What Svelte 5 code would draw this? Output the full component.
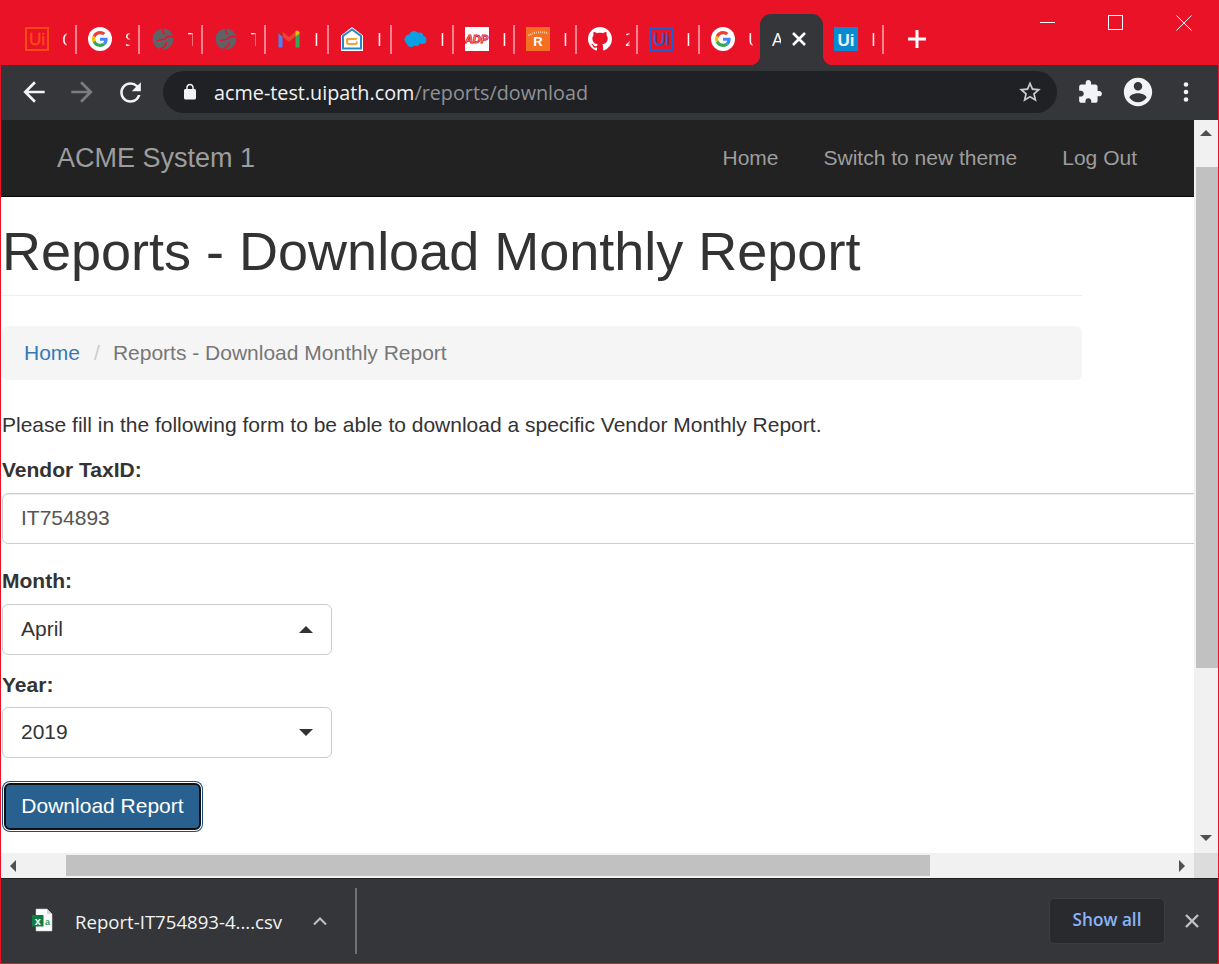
<script>
  const tabs = [
    { w: 63, icon: 'ui-orange', t: 'O', sep: true },
    { w: 63, icon: 'google', t: 'S', sep: true },
    { w: 63, icon: 'globe', t: 'T', sep: true },
    { w: 63, icon: 'globe', t: 'T', sep: true },
    { w: 63, icon: 'gmail', t: 'I', sep: true },
    { w: 63, icon: 'mail', t: 'I', sep: true },
    { w: 62, icon: 'cloud', t: 'I', sep: true },
    { w: 61, icon: 'adp', t: 'I', sep: true },
    { w: 62, icon: 'r', t: 'I', sep: true },
    { w: 61, icon: 'github', t: '2', sep: true },
    { w: 62, icon: 'ui-blue', t: 'I', sep: true },
    { w: 60, icon: 'google', t: 'U', sep: false },
    { w: 63, icon: 'active', t: 'A', sep: false },
    { w: 61, icon: 'ui-fill', t: 'I', sep: true }
  ];
</script>

<div class="window">
  <header class="strip">
    <div class="tabs">
      {#each tabs as tab}
        <div class="tab" class:active={tab.icon === 'active'} class:sep={tab.sep} style="width:{tab.w}px">
          {#if tab.icon === 'active'}
            <span class="active-title">A</span>
            <svg class="tab-close" width="16" height="16" viewBox="0 0 16 16"><path d="M2 2l12 12M14 2L2 14" stroke="#fff" stroke-width="2.6" fill="none"/></svg>
          {:else}
            <svg class="fav" width="24" height="24" viewBox="0 0 24 24">
              {#if tab.icon === 'ui-orange'}
                <rect x="1" y="1" width="22" height="22" fill="none" stroke="#fa4a14" stroke-width="2"/>
                <text x="12" y="18" class="ui" fill="#fa4a14" stroke="#fa4a14">Ui</text>
              {:else if tab.icon === 'ui-blue'}
                <rect x="1" y="1" width="22" height="22" fill="none" stroke="#1a5fd8" stroke-width="2"/>
                <text x="12" y="18" class="ui" fill="#1a5fd8" stroke="#1a5fd8">Ui</text>
              {:else if tab.icon === 'ui-fill'}
                <rect width="24" height="24" fill="#0a8ad0"/>
                <text x="12" y="18.500" class="ui strong" fill="#eaf7ff">Ui</text>
              {:else if tab.icon === 'google'}
                <circle cx="12" cy="12" r="12" fill="#fff"/>
                <g transform="translate(4 4) scale(.3333)">
                  <path fill="#EA4335" d="M24 9.5c3.54 0 6.71 1.22 9.21 3.6l6.85-6.85C35.9 2.38 30.47 0 24 0 14.62 0 6.51 5.38 2.56 13.22l7.98 6.19C12.43 13.72 17.74 9.5 24 9.5z"/>
                  <path fill="#4285F4" d="M46.98 24.55c0-1.57-.15-3.09-.38-4.55H24v9.02h12.94c-.58 2.96-2.26 5.48-4.78 7.18l7.73 6c4.51-4.18 7.09-10.36 7.09-17.65z"/>
                  <path fill="#FBBC05" d="M10.53 28.59c-.48-1.45-.76-2.99-.76-4.59s.27-3.14.76-4.59l-7.98-6.19C.92 16.46 0 20.12 0 24c0 3.88.92 7.54 2.56 10.78l7.97-6.19z"/>
                  <path fill="#34A853" d="M24 48c6.48 0 11.93-2.13 15.89-5.81l-7.73-6c-2.15 1.45-4.92 2.3-8.16 2.3-6.26 0-11.57-4.22-13.47-9.91l-7.98 6.19C6.51 42.62 14.62 48 24 48z"/>
                </g>
              {:else if tab.icon === 'globe'}
                <circle cx="12" cy="12" r="10.500" fill="#5f6368"/>
                <g fill="none" stroke="#ea1227" stroke-width="1.700">
                  <path d="M22 10c-4-1.500-6-.5-8 1.500s-5 .5-8 2.500"/>
                  <path d="M12.500 1.500c-2 3-.5 5 1.500 5.500"/>
                  <path d="M9 22c3-1 6-3 6.500-7"/>
                </g>
              {:else if tab.icon === 'gmail'}
                <path d="M1.500 5.500v15h4v-11z" fill="#4285f4"/>
                <path d="M18.500 9.500v11h4v-15z" fill="#34a853"/>
                <path d="M5.500 4.500L12 10l6.500-5.500v5L12 15 5.500 9.500z" fill="#ea4335"/>
                <path d="M1.500 5.500a2.500 2.500 0 0 1 4-1.500v5.500l-4-3z" fill="#c5221f"/>
                <path d="M18.500 4a2.500 2.500 0 0 1 4 1.500v1l-4 3z" fill="#fbbc04"/>
              {:else if tab.icon === 'mail'}
                <path d="M12 0L1 8.500V24h22V8.500z" fill="#fff"/>
                <path d="M12 2.500L3 9v12.500h18V9z" fill="none" stroke="#2a86c4" stroke-width="2"/>
                <path d="M7 11h11l-2 2H9.500c-1 0-1.500.5-1.500 1.500S8.500 16 9.500 16H16v-2l2 1c0 2-1 3-2.500 3h-7C7 18 6 17 6 15c0-2 0-3 1-4z" fill="#f2a33a"/>
              {:else if tab.icon === 'cloud'}
                <g fill="#0b9fe3">
                  <circle cx="6.500" cy="12.500" r="5"/>
                  <circle cx="11" cy="8.500" r="4.500"/>
                  <circle cx="16.500" cy="9.500" r="4"/>
                  <circle cx="19.500" cy="13" r="4"/>
                  <circle cx="13" cy="15" r="4"/>
                  <circle cx="8" cy="16" r="4"/>
                </g>
              {:else if tab.icon === 'adp'}
                <rect width="24" height="24" fill="#fff"/>
                <text x="11.500" y="16" class="adp">ADP</text>
              {:else if tab.icon === 'r'}
                <rect width="24" height="24" fill="#f37022"/>
                <path d="M2.500 8.500Q12 3 22 6.500" fill="none" stroke="#f9c9a5" stroke-width="2" stroke-dasharray="1 1"/>
                <text x="12" y="18.500" class="rr">R</text>
              {:else if tab.icon === 'github'}
                <g transform="scale(1.500)"><path fill="#fff" d="M8 0C3.580 0 0 3.580 0 8c0 3.540 2.290 6.530 5.470 7.590.4.07.55-.17.55-.38 0-.19-.01-.82-.01-1.490-2.010.37-2.530-.49-2.690-.94-.09-.23-.48-.94-.82-1.130-.28-.15-.68-.52-.01-.53.63-.01 1.080.58 1.230.82.72 1.210 1.870.87 2.330.66.07-.52.28-.87.51-1.070-1.780-.2-3.640-.89-3.640-3.950 0-.87.31-1.590.82-2.150-.08-.2-.36-1.020.08-2.120 0 0 .67-.21 2.200.82.64-.18 1.320-.27 2-.27.68 0 1.360.09 2 .27 1.530-1.040 2.200-.82 2.200-.82.44 1.100.16 1.920.08 2.120.51.56.82 1.270.82 2.150 0 3.070-1.870 3.750-3.650 3.950.29.25.54.73.54 1.480 0 1.070-.01 1.930-.01 2.200 0 .21.15.46.55.38A8.013 8.013 0 0016 8c0-4.420-3.580-8-8-8z"/></g>
              {/if}
            </svg>
            <span class="sliver">{tab.t}</span>
          {/if}
        </div>
      {/each}
    </div>
    <svg class="plus" width="20" height="20" viewBox="0 0 20 20"><path d="M10 1v18M1 10h18" stroke="#fff" stroke-width="3" fill="none"/></svg>
    <div class="controls">
      <div class="ctl"><svg width="16" height="16" viewBox="0 0 16 16"><path d="M0 7.500h15" stroke="#fff" fill="none"/></svg></div>
      <div class="ctl mid"><svg width="16" height="16" viewBox="0 0 16 16"><rect x=".5" y=".5" width="14" height="14" stroke="#fff" fill="none"/></svg></div>
      <div class="ctl"><svg width="16" height="16" viewBox="0 0 16 16"><path d="M.5.5l15 15M15.500.5l-15 15" stroke="#fff" fill="none"/></svg></div>
    </div>
  </header>

  <div class="toolbar">
    <div class="tb-btn"><svg width="32" height="32" viewBox="0 0 24 24"><path fill="#f1f3f4" d="M20 11H7.830l5.590-5.590L12 4l-8 8 8 8 1.410-1.410L7.830 13H20v-2z"/></svg></div>
    <div class="tb-btn"><svg width="32" height="32" viewBox="0 0 24 24"><path fill="#7c7d80" d="M4 11h12.170l-5.590-5.590L12 4l8 8-8 8-1.410-1.410L16.170 13H4v-2z"/></svg></div>
    <div class="tb-btn"><svg width="31" height="31" viewBox="0 0 24 24"><path fill="#f1f3f4" d="M17.650 6.350A7.958 7.958 0 0 0 12 4c-4.420 0-7.990 3.580-7.990 8s3.570 8 7.990 8c3.730 0 6.840-2.550 7.730-6h-2.080A5.990 5.990 0 0 1 12 18c-3.310 0-6-2.690-6-6s2.690-6 6-6c1.660 0 3.140.69 4.220 1.780L13 11h7V4l-2.350 2.350z"/></svg></div>
    <div class="omni">
      <svg class="lock" width="18" height="18" viewBox="0 0 24 24"><path fill="#f1f3f4" d="M18 8h-1V6c0-2.760-2.240-5-5-5S7 3.240 7 6v2H6c-1.100 0-2 .9-2 2v10c0 1.100.9 2 2 2h12c1.100 0 2-.9 2-2V10c0-1.100-.9-2-2-2zM9 6c0-1.660 1.340-3 3-3s3 1.340 3 3v2H9V6z"/></svg>
      <span class="url"><span class="host">acme-test.uipath.com</span><span class="path">/reports/download</span></span>
      <svg class="star" width="26" height="26" viewBox="0 0 24 24"><path fill="#c9cacb" d="M22 9.240l-7.190-.62L12 2 9.190 8.630 2 9.240l5.460 4.730L5.820 21 12 17.270 18.180 21l-1.630-7.030L22 9.240zM12 15.400l-3.760 2.270 1-4.280-3.320-2.880 4.380-.38L12 6.100l1.710 4.040 4.380.38-3.320 2.880 1 4.280L12 15.400z"/></svg>
    </div>
    <div class="tb-btn first-r"><svg width="26" height="26" viewBox="0 0 24 24"><path fill="#f1f3f4" d="M20.500 11H19V7c0-1.100-.9-2-2-2h-4V3.500C13 2.120 11.880 1 10.500 1S8 2.120 8 3.500V5H4c-1.100 0-1.990.9-1.990 2v3.800H3.500c1.490 0 2.700 1.210 2.700 2.700s-1.210 2.700-2.700 2.700H2V20c0 1.100.9 2 2 2h3.800v-1.500c0-1.490 1.210-2.700 2.700-2.700 1.490 0 2.700 1.210 2.700 2.700V22H17c1.100 0 2-.9 2-2v-4h1.500c1.380 0 2.500-1.120 2.500-2.500S21.880 11 20.500 11z"/></svg></div>
    <div class="tb-btn"><svg width="34" height="34" viewBox="0 0 24 24"><path fill="#f1f3f4" d="M12 2C6.480 2 2 6.480 2 12s4.480 10 10 10 10-4.480 10-10S17.520 2 12 2zm0 3c1.660 0 3 1.340 3 3s-1.340 3-3 3-3-1.340-3-3 1.340-3 3-3zm0 14.200c-2.500 0-4.710-1.280-6-3.220.03-1.990 4-3.080 6-3.080 1.990 0 5.970 1.090 6 3.080-1.290 1.940-3.500 3.220-6 3.220z"/></svg></div>
    <div class="tb-btn"><svg width="6" height="22" viewBox="0 0 6 22"><circle cx="3" cy="3.500" r="2.300" fill="#f1f3f4"/><circle cx="3" cy="11" r="2.300" fill="#f1f3f4"/><circle cx="3" cy="18.500" r="2.300" fill="#f1f3f4"/></svg></div>
  </div>

  <div class="page">
    <div class="page-main">
      <div class="viewport">
        <nav class="navbar">
          <span class="brand">ACME System 1</span>
          <div class="links">
            <span>Home</span>
            <span>Switch to new theme</span>
            <span>Log Out</span>
          </div>
        </nav>
        <main class="content">
          <h1>Reports - Download Monthly Report</h1>
          <div class="crumb">
            <span class="crumb-home">Home</span>
            <span class="crumb-sep">/</span>
            <span class="crumb-cur">Reports - Download Monthly Report</span>
          </div>
          <p>Please fill in the following form to be able to download a specific Vendor Monthly Report.</p>
          <div class="label l-vendor">Vendor TaxID:</div>
          <input class="field" value="IT754893" readonly />
          <div class="label l-month">Month:</div>
          <div class="select"><span>April</span><i class="tri up"></i></div>
          <div class="label l-year">Year:</div>
          <div class="select"><span>2019</span><i class="tri down"></i></div>
          <button class="download">Download Report</button>
        </main>
      </div>
      <div class="vbar">
        <div class="varrow"><i class="tri-s up"></i></div>
        <div class="vthumb"></div>
        <div class="varrow end"><i class="tri-s down"></i></div>
      </div>
    </div>
    <div class="hbar">
      <div class="harrow"><i class="tri-s left"></i></div>
      <div class="hthumb"></div>
      <div class="harrow right"><i class="tri-s rightw"></i></div>
      <div class="corner"></div>
    </div>
  </div>

  <footer class="dlbar">
    <svg class="xl" width="22" height="24" viewBox="0 0 22 24">
      <path d="M5 1h11l5 5v17H5z" fill="#fff" stroke="#c8c8c8" stroke-width=".6"/>
      <path d="M16 1l5 5h-5z" fill="#d5d5d5"/>
      <rect x="1" y="7" width="11.500" height="11.500" fill="#107c41"/>
      <text x="6.700" y="16.500" class="xl-x">x</text>
      <text x="16.500" y="17" class="xl-a">a</text>
    </svg>
    <span class="fname">Report-IT754893-4....csv</span>
    <svg class="chev" width="16" height="10" viewBox="0 0 16 10"><path d="M2 8.500l6-6 6 6" stroke="#bdc1c6" stroke-width="2" fill="none"/></svg>
    <div class="dl-sep"></div>
    <div class="showall"><span>Show all</span></div>
    <svg class="dl-x" width="14" height="14" viewBox="0 0 14 14"><path d="M1 1l12 12M13 1L1 13" stroke="#c0c1c2" stroke-width="2.400" fill="none"/></svg>
  </footer>
</div>

<style>
  :global(body) { margin: 0; background: #ea1227; }
  .window {
    width: 1219px; height: 964px; box-sizing: border-box;
    padding: 0 1px 1px; background: #ea1227;
    display: flex; flex-direction: column; overflow: hidden;
    font-family: "Liberation Sans", Arial, sans-serif;
  }
  .strip { height: 65px; flex: none; display: flex; padding-left: 13px; position: relative; }
  .tabs { display: flex; align-items: flex-end; height: 65px; }
  .tab { height: 51px; box-sizing: border-box; padding: 13px 0 0 11px; display: flex; position: relative; flex: none; }
  .tab.sep::after {
    content: ""; position: absolute; right: 0; top: 11px; height: 29px; width: 2px; background: #f6828f;
  }
  .tab.active { background: #35363a; border-radius: 11px 11px 0 0; padding-left: 12px; color: #fff; }
  .tab.active::before, .tab.active::after {
    content: ""; position: absolute; bottom: 0; width: 10px; height: 10px;
  }
  .tab.active::before { left: -10px; background: radial-gradient(circle at 0 0, transparent 10px, #35363a 10.500px); }
  .tab.active::after { right: -10px; background: radial-gradient(circle at 100% 0, transparent 10px, #35363a 10.500px); }
  .fav { flex: none; display: block; }
  .ui { font: 400 17px "Liberation Sans", sans-serif; text-anchor: middle; stroke-width: .4px; }
  .ui.strong { font-weight: 700; }
  .adp { font: italic 900 11px "Liberation Sans", sans-serif; text-anchor: middle; fill: #fff; stroke: #e21a23; stroke-width: 1px; }
  .rr { font: 700 13px "Liberation Sans", sans-serif; text-anchor: middle; fill: #fff; }
  .sliver {
    width: 5px; margin-left: 13px; overflow: hidden; color: #fff;
    font: 18px/24px "Open Sans", sans-serif;
    -webkit-mask-image: linear-gradient(90deg, #000 45%, rgba(0,0,0,.35));
    mask-image: linear-gradient(90deg, #000 45%, rgba(0,0,0,.35));
  }
  .active-title {
    width: 9px; overflow: hidden; color: #fff; font: 18px/24px "Open Sans", sans-serif; flex: none;
  }
  .tab-close { margin: 4px 0 0 10px; flex: none; }
  .plus { margin: 29px 0 0 23px; flex: none; }
  .controls { margin-left: auto; display: flex; align-items: flex-start; }
  .ctl { width: 69px; height: 46px; display: flex; align-items: center; justify-content: center; }
  .ctl.mid { width: 67px; }

  .toolbar {
    height: 55px; flex: none; background: #35363a; display: flex; align-items: center; padding: 0 0 1px 9px;
    box-sizing: border-box;
  }
  .tb-btn { width: 48px; height: 42px; display: flex; align-items: center; justify-content: center; flex: none; }
  .first-r { margin-left: 9px; }
  .omni {
    margin-left: 9px; width: 894px; height: 42px; border-radius: 21px; background: #202124;
    display: flex; align-items: center; box-sizing: border-box; padding: 0 14px 0 18px; flex: none;
  }
  .lock { flex: none; }
  .url { margin-left: 15px; font: 19.800px "Open Sans", sans-serif; flex: 1; white-space: nowrap; }
  .host { color: #f1f3f4; }
  .path { color: #8f9296; }
  .star { flex: none; }

  .page { height: 758px; flex: none; display: flex; flex-direction: column; background: #fff; }
  .page-main { flex: 1; display: flex; min-height: 0; }
  .viewport { width: 1193px; flex: none; overflow: hidden; color: #333; font-size: 21px; line-height: 28.600px; }
  .navbar {
    height: 77px; box-sizing: border-box; background: #222; border-bottom: 1px solid #080808;
    display: flex; align-items: center; padding: 0 57px 0 56px; color: #9d9d9d;
  }
  .brand { font-size: 27px; }
  .links { margin-left: auto; display: flex; gap: 45px; }
  .content { padding-left: 0; }
  h1 {
    font-size: 54px; font-weight: 400; line-height: 57px; margin: 26px 0 0; padding-bottom: 15px;
    width: 1081px; border-bottom: 1px solid #eee; color: #333;
    padding-left: 1px; box-sizing: border-box; height: 73px;
  }
  .crumb {
    margin: 30px 0 0 1px; width: 1080px; height: 54px; box-sizing: border-box; background: #f5f5f5;
    border-radius: 6px; display: flex; align-items: center; padding-left: 22px;
  }
  .crumb-home { color: #337ab7; }
  .crumb-sep { color: #ccc; margin: 0 13px 0 14px; }
  .crumb-cur { color: #777; }
  p { margin: 31px 0 0 1px; }
  .label { font-weight: 700; margin-left: 1px; height: 28px; }
  .l-vendor { margin-top: 16px; margin-bottom: 9px; }
  .l-month { margin-top: 23px; margin-bottom: 9px; }
  .l-year { margin-top: 16px; margin-bottom: 8.400px; }
  .field {
    display: block; width: 1300px; height: 51px; box-sizing: border-box; margin: 0 0 0 1px;
    border: 1px solid #ccc; border-radius: 6px; padding: 0 18px; background: #fff;
    color: #555; font: 21px "Liberation Sans", sans-serif; outline: none;
    box-shadow: inset 0 1px 1px rgba(0,0,0,.075);
  }
  .select {
    width: 330px; height: 51px; box-sizing: border-box; margin-left: 1px; border: 1px solid #ccc; border-radius: 6px;
    display: flex; align-items: center; justify-content: space-between; padding: 0 18px; color: #333;
  }
  .tri { width: 0; height: 0; border-left: 7px solid transparent; border-right: 7px solid transparent; }
  .tri.up { border-bottom: 7px solid #333; }
  .tri.down { border-top: 7px solid #333; }
  .download {
    display: block; margin: 24.600px 0 0 3px; width: 197px; height: 47px; box-sizing: border-box;
    background: #286090; color: #fff; border: 2px solid #111; border-radius: 6px;
    box-shadow: 0 0 0 1px #fff, 0 0 0 2px #204d74;
    font: 21px "Liberation Sans", sans-serif; padding: 0;
  }

  .vbar { width: 24px; flex: none; background: #f1f1f1; display: flex; flex-direction: column; }
  .varrow { height: 47px; display: flex; justify-content: center; padding-top: 10px; box-sizing: border-box; }
  .varrow.end { height: 26px; margin-top: auto; padding-top: 8px; align-items: flex-start; }
  .vthumb { height: 501px; width: 22px; margin-left: 2px; background: #c1c1c1; flex: none; }
  .tri-s { width: 0; height: 0; display: block; }
  .tri-s.up { border-left: 6px solid transparent; border-right: 6px solid transparent; border-bottom: 6px solid #505050; }
  .tri-s.down { border-left: 6px solid transparent; border-right: 6px solid transparent; border-top: 6px solid #505050; }
  .tri-s.left { border-top: 6px solid transparent; border-bottom: 6px solid transparent; border-right: 6px solid #505050; }
  .tri-s.rightw { border-top: 6px solid transparent; border-bottom: 6px solid transparent; border-left: 6px solid #505050; }

  .hbar { height: 25px; flex: none; background: #f1f1f1; display: flex; align-items: center; }
  .harrow { width: 65px; display: flex; justify-content: flex-start; padding-left: 9px; box-sizing: border-box; flex: none; }
  .hthumb { width: 864px; height: 21px; background: #c1c1c1; flex: none; }
  .harrow.right { margin-left: auto; width: 24px; padding-left: 9px; }
  .corner { width: 24px; height: 25px; background: #dcdcdc; flex: none; }

  .dlbar {
    flex: 1; background: #35363a; border-top: 1px solid #202124; box-sizing: border-box;
    display: flex; align-items: center; padding: 0 19px 0 30px; color: #f1f3f4;
    font-family: "Open Sans", sans-serif;
  }
  .xl { flex: none; margin-bottom: 3px; }
  .xl-x { font: 700 11px "Liberation Sans", sans-serif; fill: #fff; text-anchor: middle; }
  .xl-a { font: 700 9px "Liberation Sans", sans-serif; fill: #21a366; text-anchor: middle; }
  .fname { margin-left: 22px; font-size: 18.600px; white-space: nowrap; }
  .chev { margin-left: 30px; flex: none; }
  .dl-sep { width: 2px; height: 66px; background: #6f7073; margin-left: 27px; flex: none; }
  .showall {
    margin-left: auto; width: 116px; height: 46px; box-sizing: border-box; background: #292a2d;
    border: 1px solid #3c3d41; border-radius: 5px; color: #8ab4f8;
    display: flex; align-items: center; justify-content: center; font-size: 17.200px; font-weight: 600;
    padding-bottom: 4px;
  }
  .dl-x { margin-left: 20px; flex: none; }
</style>
